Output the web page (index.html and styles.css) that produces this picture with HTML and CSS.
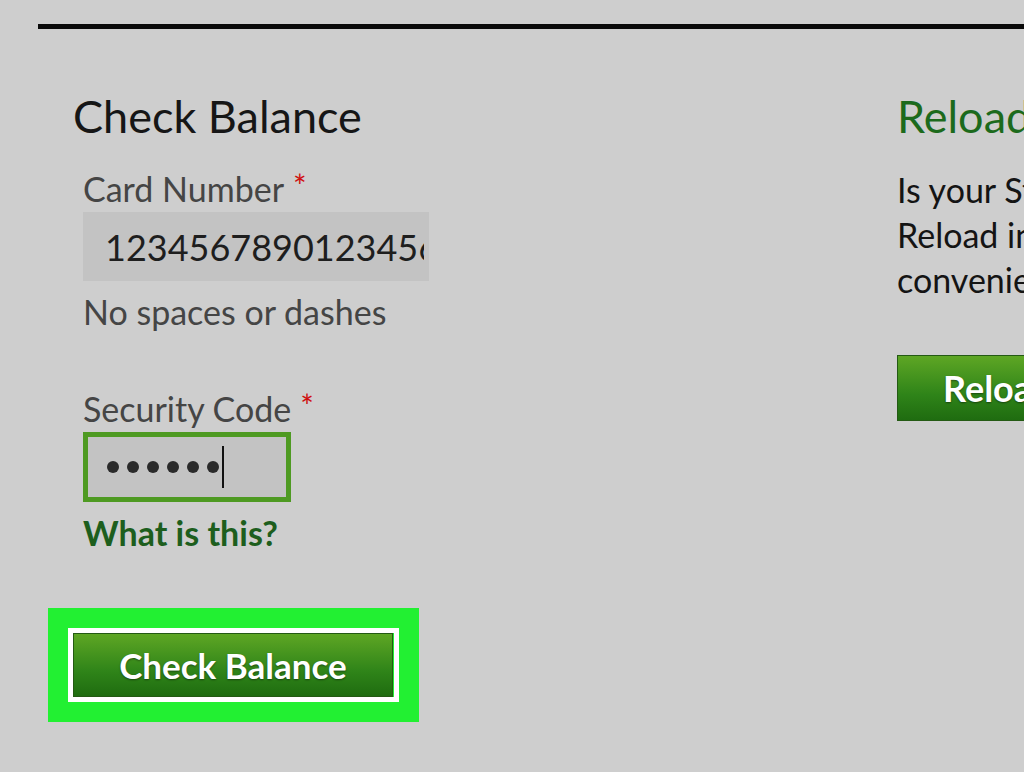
FILE: index.html
```html
<!DOCTYPE html>
<html>
<head>
<meta charset="utf-8">
<link rel="stylesheet" href="styles.css">
</head>
<body>
<div class="rule"></div>
<main class="cols">
  <section class="check">
    <h2 class="title">Check Balance</h2>
    <div class="field">
      <label class="label">Card Number<span class="req">*</span></label>
      <div class="input card-input"><span class="clip"><span class="digits">1234567890123456</span></span></div>
      <div class="hint">No spaces or dashes</div>
    </div>
    <div class="field sec">
      <label class="label">Security Code<span class="req">*</span></label>
      <div class="input sec-input">
        <span class="dot"></span><span class="dot"></span><span class="dot"></span><span class="dot"></span><span class="dot"></span><span class="dot"></span><span class="caret"></span>
      </div>
      <a class="what">What is this?</a>
    </div>
    <div class="highlight">
      <div class="frame"><button class="btn btn-check">Check Balance</button></div>
    </div>
  </section>
  <section class="reload">
    <h2 class="title green">Reload</h2>
    <p class="para">Is your Starbucks Card running low?<br>Reload instantly online or set up<br>convenient auto-reload.</p>
    <button class="btn btn-reload">Reload</button>
  </section>
</main>
</body>
</html>
```
FILE: styles.css
```css
html, body {
  margin: 0;
  padding: 0;
}
body {
  width: 1024px;
  height: 772px;
  overflow: hidden;
  background: #cecece;
  font-family: Lato, "Open Sans", sans-serif;
  color: #1a1a1a;
}
.rule {
  margin: 24px 0 0 38px;
  height: 5px;
  background: #0a0a0a;
}
.cols {
  display: flex;
  padding-left: 73px;
}
.check {
  width: 824px;
  flex: none;
}
.reload {
  flex: none;
  width: 127px;
  overflow: hidden;
}
.title {
  margin: 62px 0 0 0;
  font-size: 45px;
  line-height: 50px;
  font-weight: 400;
  color: #161616;
  white-space: nowrap;
}
.title.green {
  color: #1c6a1c;
}
.field {
  padding-left: 10px;
  margin-top: 28px;
}
.field.sec {
  margin-top: 57px;
}
.label {
  display: block;
  font-size: 34px;
  line-height: 40px;
  color: #454545;
  white-space: nowrap;
}
.req {
  color: #d01010;
  font-size: 32px;
  line-height: 0;
  vertical-align: 4px;
  margin-left: 9px;
}
.input {
  margin-top: 3px;
  background: #c3c3c3;
  box-sizing: border-box;
  display: flex;
  align-items: center;
}
.card-input {
  width: 346px;
  height: 69px;
  padding: 0 5px 0 22px;
}
.clip {
  display: block;
  overflow: hidden;
  flex: 1;
}
.digits {
  font-size: 36px;
  color: #1e1e1e;
  white-space: nowrap;
}
.hint {
  margin-top: 11px;
  font-size: 34px;
  line-height: 40px;
  color: #454545;
  white-space: nowrap;
}
.sec-input {
  width: 208px;
  height: 70px;
  border: 5px solid #4e9a22;
  padding-left: 19px;
  gap: 8px;
}
.dot {
  width: 12px;
  height: 12px;
  border-radius: 50%;
  background: #2a2a2a;
  flex: none;
}
.caret {
  width: 2px;
  height: 42px;
  background: #111;
  margin-left: -5px;
  flex: none;
}
.what {
  display: block;
  margin-top: 11px;
  font-size: 34px;
  line-height: 40px;
  font-weight: 700;
  color: #1d5e1d;
  white-space: nowrap;
}
.highlight {
  margin: 55px 0 0 -25px;
  width: 371px;
  box-sizing: border-box;
  padding: 20px;
  background: #22f032;
}
.frame {
  border: 5px solid #ffffff;
  display: flex;
}
.btn {
  border: 1px solid #245a14;
  background: linear-gradient(#5ea624, #2f8419 60%, #1f6c10);
  color: #ffffff;
  font-family: Lato, "Open Sans", sans-serif;
  font-weight: 700;
  text-shadow: 0 1px 2px rgba(0, 0, 0, 0.45);
  padding: 0;
  margin: 0;
  white-space: nowrap;
}
.btn-check {
  width: 320px;
  height: 64px;
  font-size: 35px;
}
.para {
  margin: 26px 0 0 0;
  font-size: 34px;
  line-height: 45px;
  color: #141414;
  white-space: nowrap;
}
.btn-reload {
  margin-top: 53px;
  width: 260px;
  height: 66px;
  font-size: 36px;
  text-align: left;
  padding-left: 45px;
}
```
